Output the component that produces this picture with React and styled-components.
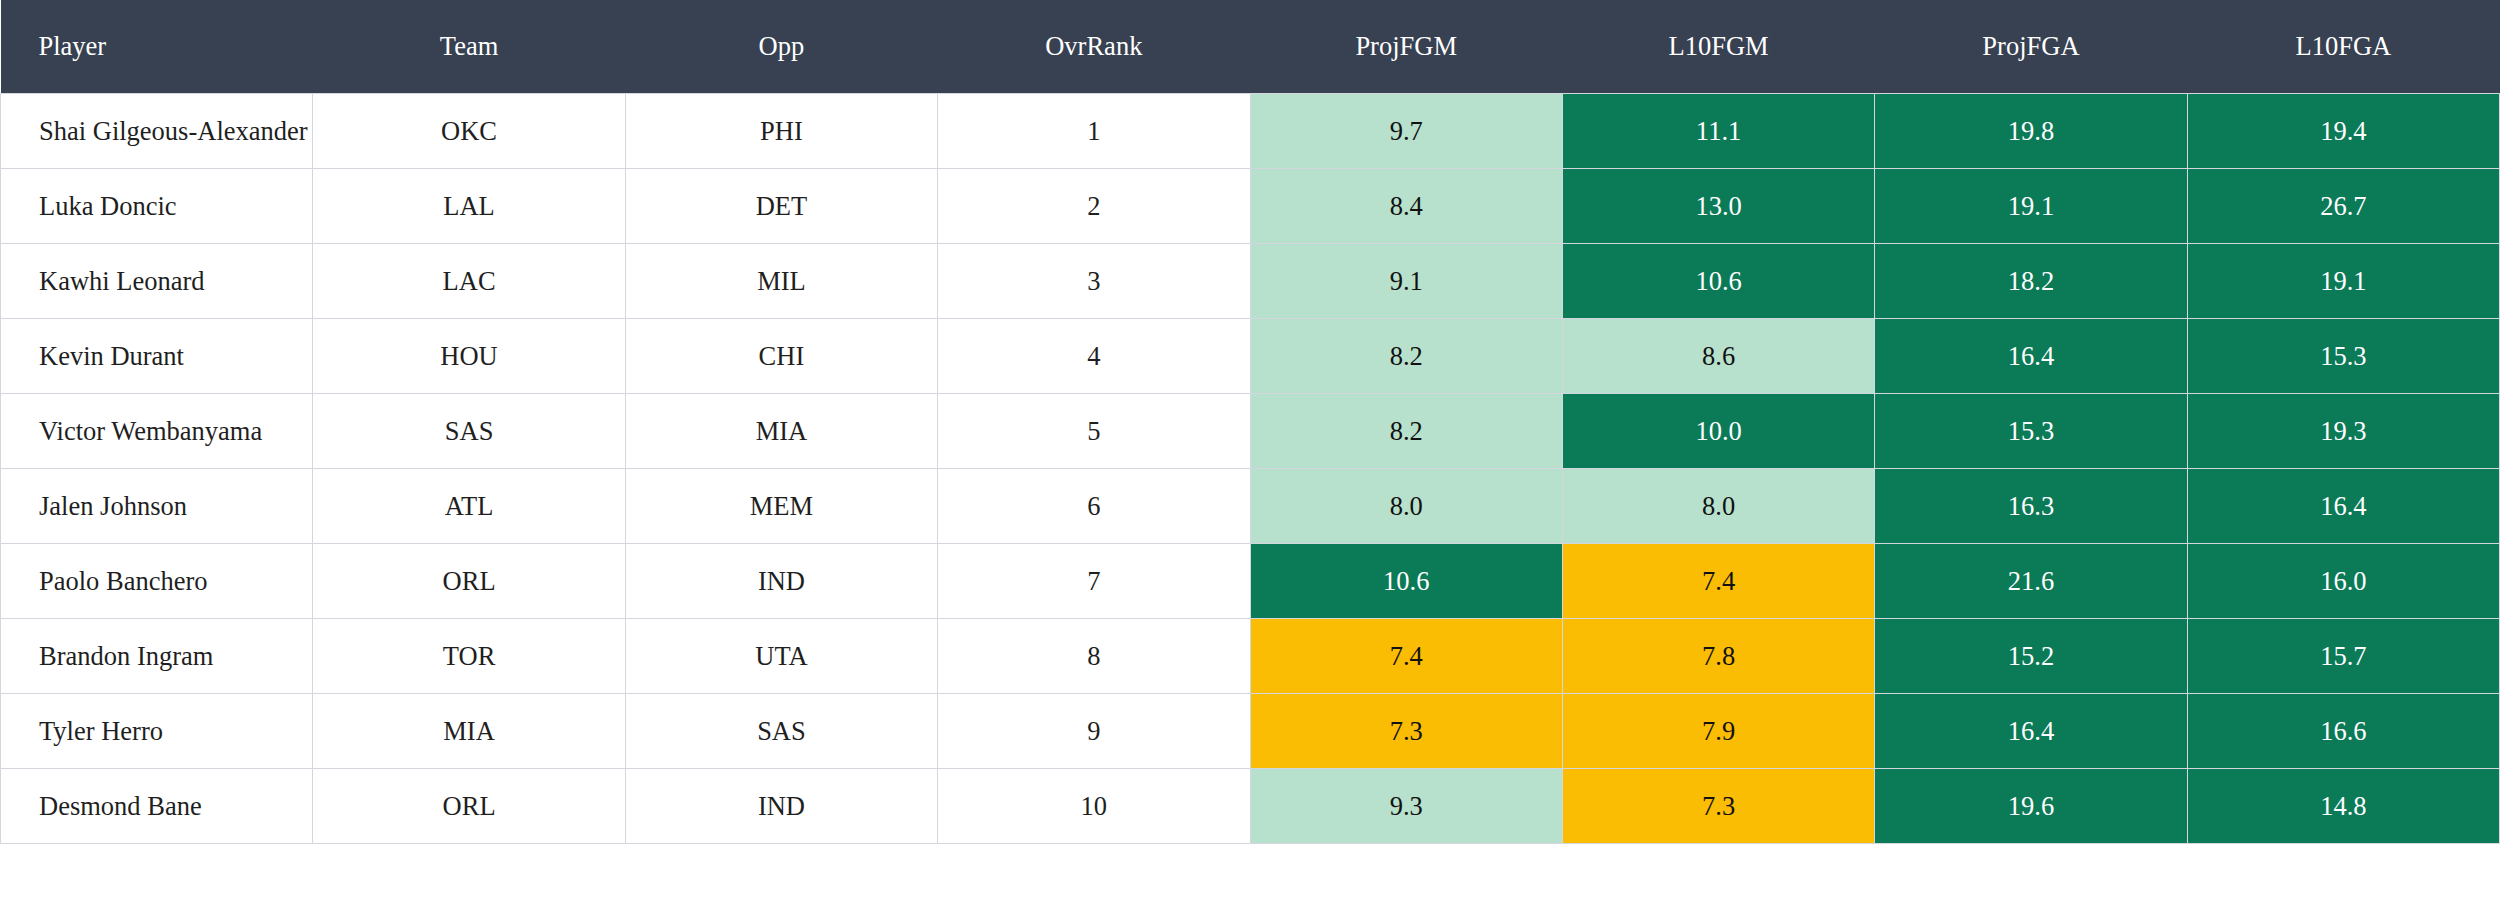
import React from 'react';
import styled, { createGlobalStyle } from 'styled-components';

const players = [
  { name: 'Shai Gilgeous-Alexander', team: 'OKC', opp: 'PHI', rank: 1, projFgm: '9.7', l10Fgm: '11.1', projFga: '19.8', l10Fga: '19.4' },
  { name: 'Luka Doncic', team: 'LAL', opp: 'DET', rank: 2, projFgm: '8.4', l10Fgm: '13.0', projFga: '19.1', l10Fga: '26.7' },
  { name: 'Kawhi Leonard', team: 'LAC', opp: 'MIL', rank: 3, projFgm: '9.1', l10Fgm: '10.6', projFga: '18.2', l10Fga: '19.1' },
  { name: 'Kevin Durant', team: 'HOU', opp: 'CHI', rank: 4, projFgm: '8.2', l10Fgm: '8.6', projFga: '16.4', l10Fga: '15.3' },
  { name: 'Victor Wembanyama', team: 'SAS', opp: 'MIA', rank: 5, projFgm: '8.2', l10Fgm: '10.0', projFga: '15.3', l10Fga: '19.3' },
  { name: 'Jalen Johnson', team: 'ATL', opp: 'MEM', rank: 6, projFgm: '8.0', l10Fgm: '8.0', projFga: '16.3', l10Fga: '16.4' },
  { name: 'Paolo Banchero', team: 'ORL', opp: 'IND', rank: 7, projFgm: '10.6', l10Fgm: '7.4', projFga: '21.6', l10Fga: '16.0' },
  { name: 'Brandon Ingram', team: 'TOR', opp: 'UTA', rank: 8, projFgm: '7.4', l10Fgm: '7.8', projFga: '15.2', l10Fga: '15.7' },
  { name: 'Tyler Herro', team: 'MIA', opp: 'SAS', rank: 9, projFgm: '7.3', l10Fgm: '7.9', projFga: '16.4', l10Fga: '16.6' },
  { name: 'Desmond Bane', team: 'ORL', opp: 'IND', rank: 10, projFgm: '9.3', l10Fgm: '7.3', projFga: '19.6', l10Fga: '14.8' }
];

const columns = ['Player', 'Team', 'Opp', 'OvrRank', 'ProjFGM', 'L10FGM', 'ProjFGA', 'L10FGA'];
const statKeys = ['projFgm', 'l10Fgm', 'projFga', 'l10Fga'];

const tones = {
  plain: { bg: '#ffffff', fg: '#1f1f1f' },
  low: { bg: '#fbbc04', fg: '#111111' },
  mid: { bg: '#b7e1cd', fg: '#111111' },
  high: { bg: '#0b7a57', fg: '#ffffff' }
};

function toneFor(value) {
  const n = parseFloat(value);
  if (n >= 10) return 'high';
  if (n >= 8) return 'mid';
  return 'low';
}

export default function App() {
  return (
    <>
      <GlobalStyle />
      <Page>
        <Table>
          <thead>
            <tr>
              {columns.map((col, i) => (
                <HeadCell key={col} $left={i === 0}>
                  {col}
                </HeadCell>
              ))}
            </tr>
          </thead>
          <tbody>
            {players.map(p => (
              <Row key={p.name}>
                <Cell $left>{p.name}</Cell>
                <Cell>{p.team}</Cell>
                <Cell>{p.opp}</Cell>
                <Cell>{p.rank}</Cell>
                {statKeys.map(k => (
                  <Cell key={k} $tone={toneFor(p[k])}>
                    {p[k]}
                  </Cell>
                ))}
              </Row>
            ))}
          </tbody>
        </Table>
      </Page>
    </>
  );
}

const GlobalStyle = createGlobalStyle`
  body {
    margin: 0;
    background: #ffffff;
    font-family: "Liberation Serif", "DejaVu Serif", serif;
  }
`;

const Page = styled.main`
  width: 2500px;
  min-height: 919px;
  background: #ffffff;
`;

const Table = styled.table`
  width: 100%;
  table-layout: fixed;
  border-collapse: collapse;
  font-size: 26.5px;
  font-variant-numeric: oldstyle-nums;
`;

const HeadCell = styled.th`
  height: 93px;
  padding: 0 ${p => (p.$left ? '38px' : '0')};
  background: #374151;
  color: #ffffff;
  font-weight: 400;
  text-align: ${p => (p.$left ? 'left' : 'center')};
  vertical-align: middle;
`;

const Row = styled.tr`
  height: 75px;
`;

const Cell = styled.td`
  padding: 0 ${p => (p.$left ? '0 0 38px' : '0')};
  border: 1px solid #d4d7dd;
  background: ${p => tones[p.$tone || 'plain'].bg};
  color: ${p => tones[p.$tone || 'plain'].fg};
  text-align: ${p => (p.$left ? 'left' : 'center')};
  white-space: nowrap;
  overflow: hidden;
  vertical-align: middle;
`;
